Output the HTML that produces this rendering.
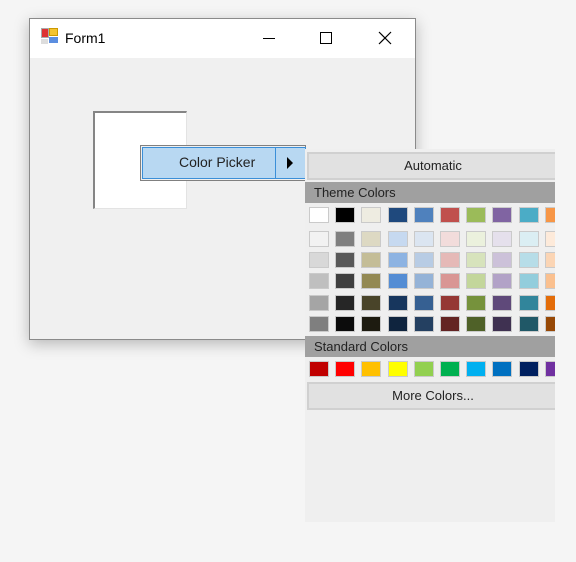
<!DOCTYPE html>
<html><head><style>
*{margin:0;padding:0;box-sizing:border-box}
body{width:576px;height:562px;background:#f5f5f5;position:relative;overflow:hidden;font-family:"Liberation Sans",sans-serif;font-size:14px;color:#000}
.win{position:absolute;left:29px;top:18px;width:387px;height:322px;border:1px solid #8a8a8a;background:#f0f0f0;box-shadow:0 4px 14px rgba(0,0,0,.25)}
.title{height:39px;background:#fff;position:relative}
.title span{position:absolute;left:35px;top:11px;font-size:14px}
.abs{position:absolute}
.pop{position:absolute;left:305px;top:149px;width:250px;height:373px;background:#efefef;overflow:hidden}
.btn{position:absolute;left:2px;width:250px;height:28px;background:#e1e1e1;border:2px solid #d0d0d0;border-right:none;text-align:center;font-size:13px;line-height:24px;color:#222}
.hdr{position:absolute;left:0;width:250px;height:21px;background:#a0a0a0;font-size:13px;line-height:21px;padding-left:9px;color:#222}
.sw{position:absolute;width:20px;height:16px;border:1px solid #cacaca}
</style></head><body>
<div class="win">
 <div class="title">
  <div class="abs" style="left:11px;top:9px;width:8px;height:10px;background:#d33;border:1px solid #aaa"></div>
  <div class="abs" style="left:19px;top:9px;width:9px;height:8px;background:#f4c430;border:1px solid #c90"></div>
  <div class="abs" style="left:19px;top:18px;width:9px;height:6px;background:#5b8ee0"></div>
  <div class="abs" style="left:11px;top:20px;width:7px;height:5px;background:#ddd"></div>
  <span>Form1</span>
  <div class="abs" style="left:233px;top:19px;width:12px;height:1px;background:#000"></div>
  <div class="abs" style="left:290px;top:13px;width:12px;height:12px;border:1px solid #000"></div>
  <svg class="abs" style="left:348px;top:12px" width="14" height="14"><path d="M1 1L13 13M13 1L1 13" stroke="#000" stroke-width="1.2"/></svg>
 </div>
 <div class="abs" style="left:63px;top:92px;width:94px;height:98px;background:#fff;border-top:2px solid #858585;border-left:2px solid #858585;border-right:1px solid #e3e3e3;border-bottom:1px solid #e3e3e3"></div>
</div>
<div class="abs" style="left:140px;top:145px;width:166px;height:36px;border:1px solid #808080;background:#f0f0f0"></div>
<div class="abs" style="left:142px;top:147px;width:164px;height:32px;background:#b8d8f2;border:1px solid #3b8fd8"></div>
<div class="abs" style="left:275px;top:147px;width:1px;height:32px;background:#3b8fd8"></div>
<div class="abs" style="left:179px;top:154px;font-size:14px;color:#222">Color Picker</div>
<svg class="abs" style="left:287px;top:157px" width="6" height="12"><path d="M0 0L6 6L0 12Z" fill="#000"/></svg>
<div class="pop" id="pop">
 <div class="btn" style="top:3px">Automatic</div>
 <div class="hdr" style="top:33px">Theme Colors</div>
 <div class="hdr" style="top:187px">Standard Colors</div>
 <div class="btn" style="top:233px">More Colors...</div>
</div>
<script>
var rows=[
["#ffffff","#000000","#eeece1","#1f497d","#4f81bd","#c0504d","#9bbb59","#8064a2","#4bacc6","#f79646"],
["#f2f2f2","#7f7f7f","#ddd9c3","#c6d9f0","#dbe5f1","#f2dcdb","#ebf1dd","#e5e0ec","#dbeef3","#fdeada"],
["#d8d8d8","#595959","#c4bd97","#8db3e2","#b8cce4","#e5b9b7","#d7e3bc","#ccc1d9","#b7dde8","#fbd5b5"],
["#bfbfbf","#3f3f3f","#938953","#548dd4","#95b3d7","#d99694","#c3d69b","#b2a2c7","#92cddc","#fac08f"],
["#a5a5a5","#262626","#494429","#17365d","#366092","#953734","#76923c","#5f497a","#31859b","#e36c09"],
["#7f7f7f","#0c0c0c","#1d1b10","#0f243e","#244061","#632423","#4f6128","#3f3151","#205867","#974806"],
["#c00000","#ff0000","#ffc000","#ffff00","#92d050","#00b050","#00b0f0","#0070c0","#002060","#7030a0"]];
var ys=[58,82,103,124,146,167,212];
var p=document.getElementById('pop'),h='';
rows.forEach(function(r,j){r.forEach(function(c,i){h+='<div class="sw" style="left:'+(4+i*26.2)+'px;top:'+ys[j]+'px;background:'+c+'"></div>';});});
p.insertAdjacentHTML('beforeend',h);
</script>
</body></html>
